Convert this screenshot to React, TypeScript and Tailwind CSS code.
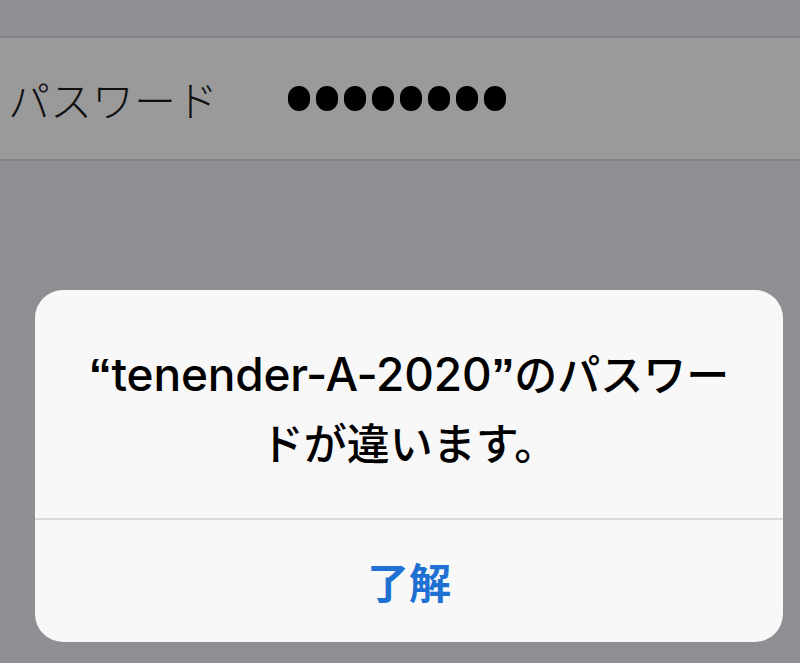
export default function App() {
  return (
    <div
      className="w-[800px] h-[663px] overflow-hidden bg-[#8f8e93] flex flex-col"
      style={{ fontFamily: '"Noto Sans CJK JP", "Noto Sans", sans-serif' }}
    >
      {/* Settings row behind the alert */}
      <div className="h-[36px] shrink-0" />
      <div className="h-[125px] shrink-0 bg-[#9a9a9b] border-y-2 border-[#838287] flex items-center pl-[8px]">
        <span className="w-[280px] text-[42px] font-light text-[#111] leading-none">パスワード</span>
        <span className="flex gap-[6px]">
          {Array.from({ length: 8 }).map((_, i) => (
            <span key={i} className="w-[22px] h-[25px] rounded-full bg-black" />
          ))}
        </span>
      </div>

      {/* Alert */}
      <div className="mt-[129px] ml-[35px] w-[748px] h-[352px] shrink-0 bg-[#f8f8f8] rounded-[28px] flex flex-col overflow-hidden">
        <div className="h-[228px] shrink-0 flex items-center justify-center pt-[4px] text-center">
          <p className="text-[43px] font-medium leading-[66px] text-black">
            <span className="font-['Inter',sans-serif] font-medium text-[46px] tracking-[-0.2px]">
              <span className="font-['Liberation_Sans',sans-serif] font-bold">“</span>
              tenender-A-2020
              <span className="font-['Liberation_Sans',sans-serif] font-bold">”</span>
            </span>
            のパスワー
            <br />
            ドが違います。
          </p>
        </div>
        <div className="h-[2px] bg-[#dadada] shrink-0" />
        <div className="flex-1 flex items-center justify-center">
          <span className="text-[42px] font-bold text-[#1e71d2] leading-none">了解</span>
        </div>
      </div>
    </div>
  );
}
